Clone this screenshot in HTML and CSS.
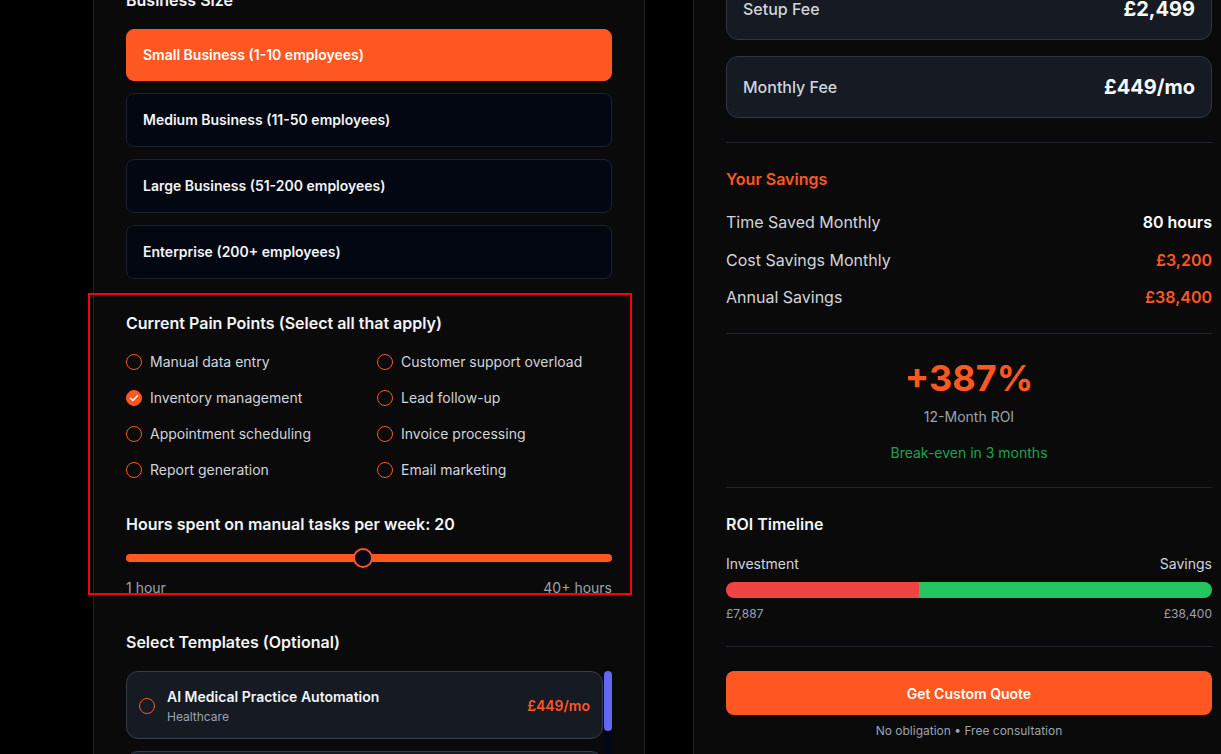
FILE: index.html
```html
<!DOCTYPE html>
<html lang="en">
<head>
<meta charset="utf-8">
<title>ROI Calculator</title>
<link rel="stylesheet" href="styles.css">
</head>
<body>
<div class="page">
  <section class="panel panel-left">
    <div class="group">
      <h3 class="label">Business Size</h3>
      <div class="size-list">
        <button class="size-opt active">Small Business (1-10 employees)</button>
        <button class="size-opt">Medium Business (11-50 employees)</button>
        <button class="size-opt">Large Business (51-200 employees)</button>
        <button class="size-opt">Enterprise (200+ employees)</button>
      </div>
    </div>

    <div class="group">
      <h3 class="label label-pain">Current Pain Points (Select all that apply)</h3>
      <div class="pain-grid">
        <label class="pain"><span class="check"></span>Manual data entry</label>
        <label class="pain"><span class="check"></span>Customer support overload</label>
        <label class="pain"><span class="check checked"><svg viewBox="0 0 16 16" width="16" height="16"><path d="M4.6 8.3l2.3 2.2 4.5-4.7" fill="none" stroke="#fff" stroke-width="1.6" stroke-linecap="round" stroke-linejoin="round"/></svg></span>Inventory management</label>
        <label class="pain"><span class="check"></span>Lead follow-up</label>
        <label class="pain"><span class="check"></span>Appointment scheduling</label>
        <label class="pain"><span class="check"></span>Invoice processing</label>
        <label class="pain"><span class="check"></span>Report generation</label>
        <label class="pain"><span class="check"></span>Email marketing</label>
      </div>
    </div>

    <div class="group">
      <h3 class="label label-hours">Hours spent on manual tasks per week: 20</h3>
      <div class="slider">
        <div class="track"></div>
        <div class="thumb" style="left: 48.77%"></div>
      </div>
      <div class="range-labels"><span>1 hour</span><span>40+ hours</span></div>
    </div>

    <div class="group">
      <h3 class="label label-tpl">Select Templates (Optional)</h3>
      <div class="tpl-scroll">
        <div class="tpl-list">
          <div class="tpl-card">
            <span class="radio"></span>
            <div class="tpl-text">
              <div class="tpl-title">AI Medical Practice Automation</div>
              <div class="tpl-sub">Healthcare</div>
            </div>
            <div class="tpl-price">£449/mo</div>
          </div>
          <div class="tpl-card">
            <span class="radio"></span>
            <div class="tpl-text">
              <div class="tpl-title">AI Legal Practice Automation</div>
              <div class="tpl-sub">Legal</div>
            </div>
            <div class="tpl-price">£449/mo</div>
          </div>
        </div>
        <div class="scrollbar"><div class="scroll-thumb"></div></div>
      </div>
    </div>
  </section>

  <aside class="panel panel-right">
    <div class="fees">
      <div class="fee-card"><span class="fee-label">Setup Fee</span><span class="fee-value">£2,499</span></div>
      <div class="fee-card"><span class="fee-label">Monthly Fee</span><span class="fee-value">£449/mo</span></div>
    </div>

    <div class="section savings">
      <h4 class="savings-title">Your Savings</h4>
      <div class="rows">
        <div class="row"><span>Time Saved Monthly</span><span class="val val-white">80 hours</span></div>
        <div class="row"><span>Cost Savings Monthly</span><span class="val val-orange">£3,200</span></div>
        <div class="row"><span>Annual Savings</span><span class="val val-orange">£38,400</span></div>
      </div>
    </div>

    <div class="section roi">
      <div class="roi-value">+387%</div>
      <div class="roi-label">12-Month ROI</div>
      <div class="roi-break">Break-even in 3 months</div>
    </div>

    <div class="section timeline">
      <h4 class="timeline-title">ROI Timeline</h4>
      <div class="bar-labels"><span>Investment</span><span>Savings</span></div>
      <div class="bar">
        <div class="bar-invest" style="width: 39.7%"></div>
        <div class="bar-save"></div>
      </div>
      <div class="bar-amounts"><span>£7,887</span><span>£38,400</span></div>
    </div>

    <div class="section cta">
      <button class="quote-btn">Get Custom Quote</button>
      <div class="cta-note">No obligation • Free consultation</div>
    </div>
  </aside>
</div>
<div class="highlight"></div>
</body>
</html>
```

FILE: styles.css
```css
* { box-sizing: border-box; }

html, body {
  margin: 0;
  padding: 0;
  overflow: hidden;
  background: #000;
  height: 754px;
}

body {
  position: relative;
  font-family: Inter, "Noto Sans", "Liberation Sans", sans-serif;
  color: #f3f4f6;
}

.page {
  display: flex;
  gap: 48px;
  padding-left: 93px;
  margin-top: -45px;
  width: 1400px;
  align-items: flex-start;
}

.panel {
  flex: 0 0 552px;
  width: 552px;
  background: #0a0a0a;
  border: 1px solid #222;
  border-radius: 16px;
  padding: 32px;
}

.panel-left {
  display: flex;
  flex-direction: column;
  gap: 32px;
  height: 900px;
}

.panel-right {
  padding-top: 22px;
  height: 900px;
}

.label {
  margin: 0;
  font-size: 16px;
  line-height: 24px;
  font-weight: 600;
  color: #f3f4f6;
}

.size-list {
  margin-top: 15px;
  display: flex;
  flex-direction: column;
  gap: 12px;
}

.size-opt {
  display: block;
  width: 100%;
  height: 54px;
  text-align: left;
  padding: 0 16px;
  font-family: inherit;
  font-size: 14px;
  line-height: 20px;
  font-weight: 600;
  color: #f3f4f6;
  background: #030712;
  border: 1px solid #1a2130;
  border-radius: 8px;
}

.size-opt.active {
  background: #ff5722;
  border-color: #ff5722;
  color: #fff;
  height: 52px;
  margin-top: 2px;
}

.label-pain { margin-bottom: 17px; }

.pain-grid {
  display: grid;
  grid-template-columns: 1fr 1fr;
  column-gap: 16px;
  row-gap: 16px;
}

.pain {
  display: flex;
  align-items: center;
  gap: 8px;
  font-size: 14px;
  line-height: 20px;
  color: #d1d5db;
}

.check, .radio {
  flex: 0 0 16px;
  width: 16px;
  height: 16px;
  border-radius: 50%;
  border: 1.5px solid #ff5722;
  display: flex;
  align-items: center;
  justify-content: center;
}

.check.checked {
  background: #ff5722;
  border-color: #ff5722;
}

.check svg { display: block; flex: 0 0 16px; }

.label-hours { margin-bottom: 12px; }

.slider {
  position: relative;
  height: 20px;
  display: flex;
  align-items: center;
}

.track {
  width: 100%;
  height: 8px;
  border-radius: 4px;
  background: #ff5722;
}

.thumb {
  position: absolute;
  top: 0;
  width: 20px;
  height: 20px;
  border-radius: 50%;
  background: #020617;
  border: 2px solid #ff5722;
  transform: translateX(-50%);
}

.range-labels {
  margin-top: 10px;
  display: flex;
  justify-content: space-between;
  font-size: 14px;
  line-height: 20px;
  color: #9ca3af;
}

.label-tpl { margin-bottom: 17px; }

.tpl-scroll {
  display: flex;
  gap: 1px;
  height: 400px;
}

.tpl-list {
  flex: 1;
  display: flex;
  flex-direction: column;
  gap: 12px;
}

.tpl-card {
  display: flex;
  align-items: center;
  gap: 12px;
  padding: 15px 12px 13px 12px;
  background: #151a23;
  border: 1px solid #353e4d;
  border-radius: 12px;
}

.tpl-text { display: flex; flex-direction: column; gap: 2px; }

.tpl-title {
  font-size: 14px;
  line-height: 20px;
  font-weight: 600;
  color: #f3f4f6;
}

.tpl-sub {
  font-size: 12px;
  line-height: 16px;
  color: #9ca3af;
}

.tpl-price {
  margin-left: auto;
  font-size: 14px;
  line-height: 20px;
  font-weight: 600;
  color: #ff5722;
}

.scrollbar {
  flex: 0 0 8px;
  width: 8px;
  background: #020617;
}

.scroll-thumb {
  height: 60px;
  border-radius: 4px;
  background: #6366f1;
}

/* right panel */
.fees {
  display: flex;
  flex-direction: column;
  gap: 16px;
}

.fee-card {
  display: flex;
  justify-content: space-between;
  align-items: center;
  padding: 16px;
  background: #151a23;
  border: 1px solid #2e3746;
  border-radius: 12px;
}

.fee-label {
  font-size: 16px;
  line-height: 24px;
  font-weight: 500;
  color: #d1d5db;
}

.fee-value {
  font-size: 20px;
  line-height: 28px;
  font-weight: 700;
  color: #f9fafb;
}

.section {
  margin-top: 24px;
  padding-top: 24px;
  border-top: 1px solid #1e2532;
}

.savings-title {
  margin: 0 0 19px 0;
  font-size: 16px;
  line-height: 24px;
  font-weight: 600;
  color: #ff5722;
}

.rows {
  display: flex;
  flex-direction: column;
  gap: 13.5px;
}

.row {
  display: flex;
  justify-content: space-between;
  font-size: 16px;
  line-height: 24px;
  color: #d1d5db;
}

.val { font-weight: 600; }
.val-white { color: #fff; }
.val-orange { color: #ff5722; }

.roi { text-align: center; }

.roi-value {
  font-size: 36px;
  line-height: 40px;
  font-weight: 700;
  color: #ff5722;
}

.roi-label {
  margin-top: 9px;
  font-size: 14px;
  line-height: 20px;
  color: #9ca3af;
}

.roi-break {
  margin-top: 16px;
  font-size: 14px;
  line-height: 20px;
  color: #1ea34d;
}

.timeline-title {
  margin: 0 0 18px 0;
  font-size: 16px;
  line-height: 24px;
  font-weight: 600;
  color: #f3f4f6;
}

.bar-labels, .bar-amounts {
  display: flex;
  justify-content: space-between;
}

.bar-labels {
  font-size: 14px;
  line-height: 20px;
  color: #d1d5db;
}

.bar {
  margin-top: 8px;
  height: 16px;
  border-radius: 8px;
  overflow: hidden;
  display: flex;
}

.bar-invest { background: #ef4444; }
.bar-save { flex: 1; background: #22c55e; }

.bar-amounts {
  margin-top: 8px;
  font-size: 12px;
  line-height: 16px;
  color: #9ca3af;
}

.quote-btn {
  display: block;
  width: 100%;
  height: 44px;
  border: none;
  border-radius: 8px;
  background: #ff5722;
  color: #fff;
  font-family: inherit;
  font-size: 14px;
  font-weight: 600;
}

.cta-note {
  margin-top: 8px;
  text-align: center;
  font-size: 12px;
  line-height: 16px;
  color: #9ca3af;
}

.highlight {
  position: absolute;
  left: 88px;
  top: 293px;
  width: 544px;
  height: 302px;
  border: 2px solid #ff0000;
  pointer-events: none;
}
```
